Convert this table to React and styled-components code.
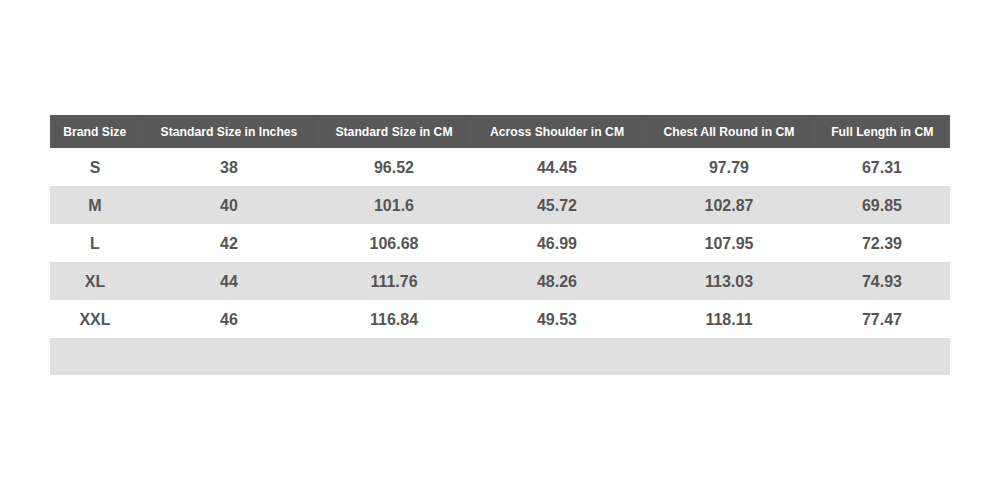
import styled, { createGlobalStyle } from 'styled-components';

const GlobalStyle = createGlobalStyle`
  body {
    margin: 0;
    background: #ffffff;
    font-family: "Liberation Sans", Arial, sans-serif;
  }
`;

const Page = styled.div`
  width: 1000px;
  height: 490px;
  padding: 115px 50px 0;
  box-sizing: border-box;
`;

const Table = styled.table`
  width: 900px;
  border-collapse: collapse;
  table-layout: fixed;
`;

const HeadCell = styled.th`
  height: 33px;
  padding: 0;
  background: #585858;
  color: #ffffff;
  font-size: 12.2px;
  font-weight: bold;
  text-align: center;
  border-left: 1px solid #5e5e5e;

  &:first-child {
    border-left: none;
  }
`;

const Row = styled.tr`
  background: ${({ $shaded }) => ($shaded ? '#e0e0e0' : '#ffffff')};
`;

const Cell = styled.td`
  height: ${({ $h }) => $h || 38}px;
  padding: 2px 0 0;
  box-sizing: border-box;
  color: #555555;
  font-size: 16px;
  font-weight: bold;
  text-align: center;
`;

const columns = [
  { title: 'Brand Size', width: 90 },
  { title: 'Standard Size in Inches', width: 178 },
  { title: 'Standard Size in CM', width: 152 },
  { title: 'Across Shoulder in CM', width: 174 },
  { title: 'Chest All Round in CM', width: 170 },
  { title: 'Full Length in CM', width: 136 },
];

const rows = [
  ['S', '38', '96.52', '44.45', '97.79', '67.31'],
  ['M', '40', '101.6', '45.72', '102.87', '69.85'],
  ['L', '42', '106.68', '46.99', '107.95', '72.39'],
  ['XL', '44', '111.76', '48.26', '113.03', '74.93'],
  ['XXL', '46', '116.84', '49.53', '118.11', '77.47'],
];

const App = () => (
  <>
    <GlobalStyle />
    <Page>
      <Table>
        <colgroup>
          {columns.map((c) => (
            <col key={c.title} style={{ width: c.width }} />
          ))}
        </colgroup>
        <thead>
          <tr>
            {columns.map((c) => (
              <HeadCell key={c.title}>{c.title}</HeadCell>
            ))}
          </tr>
        </thead>
        <tbody>
          {rows.map((r, i) => (
            <Row key={r[0]} $shaded={i % 2 === 1}>
              {r.map((v, j) => (
                <Cell key={j}>{v}</Cell>
              ))}
            </Row>
          ))}
          <Row $shaded>
            <Cell colSpan={6} $h={37} />
          </Row>
        </tbody>
      </Table>
    </Page>
  </>
);

export default App;
